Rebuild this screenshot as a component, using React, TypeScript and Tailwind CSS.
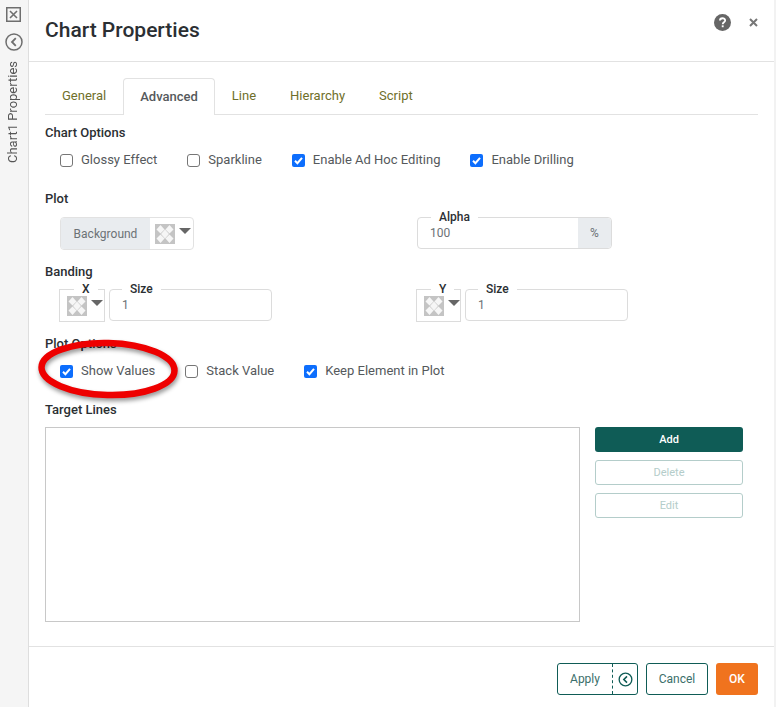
import { Fragment } from "react";

// 透明グリッド風のカラースウォッチ
function Swatch() {
  return (
    <svg width="20" height="20" viewBox="0 0 20 20" className="shrink-0">
      <rect width="20" height="20" fill="#c4c4c4" />
      <path d="M5.5 1 L9.5 5.5 L5.5 9.5 L1.5 5.5 Z M14.5 1 L18.5 5.5 L14.5 9.5 L10.5 5.5 Z M10 5.5 L14 10 L10 14.5 L6 10 Z M5.5 10.5 L9.5 14.5 L5.5 19 L1.5 14.5 Z M14.5 10.5 L18.5 14.5 L14.5 19 L10.5 14.5 Z" fill="#f6f6f6" />
    </svg>
  );
}

function Caret() {
  return <span className="w-0 h-0 border-x-[6px] border-x-transparent border-t-[6px] border-t-[#666] mt-[-6px]" />;
}

function Check({ label, checked }: { label: string; checked?: boolean }) {
  return (
    <label className="flex items-center">
      {checked ? (
        <span className="w-[13px] h-[13px] rounded-[2px] bg-[#0d6efd] flex items-center justify-center">
          <svg width="11" height="11" viewBox="0 0 11 11" fill="none">
            <path d="M2 5.8 L4.4 8.2 L9 2.8" stroke="#fff" strokeWidth="2" />
          </svg>
        </span>
      ) : (
        <span className="w-[13px] h-[13px] rounded-[3px] border border-[#767676] bg-white" />
      )}
      <span className="ml-[8px] text-[13px] text-[#55595c]">{label}</span>
    </label>
  );
}

function SectionLabel({ children, className = "" }: { children: string; className?: string }) {
  return <div className={`text-[13px] font-medium leading-[16px] text-[#2b2f33] ${className}`}>{children}</div>;
}

function Floating({ children, className }: { children: string; className: string }) {
  return (
    <span className={`absolute top-[-8px] bg-white px-[8px] text-[12px] leading-[14px] font-medium text-[#2b2f33] ${className}`}>
      {children}
    </span>
  );
}

function BandField({ axis, boxWidth }: { axis: string; boxWidth: string }) {
  return (
    <div className="flex">
      <div className={`relative ${boxWidth} h-[33px] border border-[#dcdcdc] flex items-center pl-[7px] gap-[4px]`}>
        <Floating className="left-[14px]">{axis}</Floating>
        <Swatch />
        <Caret />
      </div>
      <div className="relative w-[163px] h-[32px] ml-[4px] border border-[#dcdcdc] rounded-[4px] flex items-center pl-[12px] text-[12px] text-[#6c7276]">
        <Floating className="left-[12px]">Size</Floating>
        1
      </div>
    </div>
  );
}

const tabs = ["General", "Advanced", "Line", "Hierarchy", "Script"];

export default function App() {
  return (
    <div className="relative w-[776px] h-[707px] flex bg-[#f2f2f2] overflow-hidden font-['Roboto',sans-serif]">
      {/* 左の折りたたみパネル */}
      <aside className="w-[29px] shrink-0 border-r border-[#dedede] bg-[#f5f5f5] flex flex-col items-center pt-[7px]">
        <svg width="15" height="15" viewBox="0 0 15 15" fill="none" stroke="#6e6e6e" className="mr-[1px]">
          <rect x="0.75" y="0.75" width="13.5" height="13.5" strokeWidth="1.5" />
          <path d="M4 4 L11 11 M11 4 L4 11" strokeWidth="1.6" />
        </svg>
        <svg width="18" height="18" viewBox="0 0 18 18" fill="none" stroke="#6e6e6e" strokeWidth="1.5" className="mt-[11px] mr-[1px]">
          <circle cx="9" cy="9" r="8" />
          <path d="M10.8 5.2 L7 9 L10.8 12.8" strokeWidth="1.8" />
        </svg>
        <span className="mt-[10px] mr-[3px] text-[13px] leading-[16px] text-[#555] [writing-mode:vertical-rl] rotate-180">
          Chart1 Properties
        </span>
      </aside>

      {/* ダイアログ本体 */}
      <main className="w-[745px] shrink-0 bg-white flex flex-col">
        <header className="h-[62px] shrink-0 border-b border-[#e2e2e2] flex items-center justify-between pl-[16px] pr-[16px]">
          <h1 className="text-[21px] font-medium text-[#2b2f33]">Chart Properties</h1>
          <div className="flex items-center gap-[18px] mb-[16px]">
            <svg width="17" height="17" viewBox="0 0 18 18">
              <circle cx="9" cy="9" r="9" fill="#666" />
              <path d="M6.3 7 C6.3 3.7 11.8 3.7 11.8 6.8 C11.8 8.8 9.2 8.7 9.2 10.8" fill="none" stroke="#fff" strokeWidth="1.9" />
              <rect x="8.2" y="12" width="2" height="2" fill="#fff" />
            </svg>
            <svg width="9" height="9" viewBox="0 0 9 9" stroke="#777" strokeWidth="2">
              <path d="M1 1 L8 8 M8 1 L1 8" />
            </svg>
          </div>
        </header>

        <div className="flex-1 px-[16px]">
          <nav className="mt-[16px] h-[37px] border-b border-[#e2e2e2] flex">
            {tabs.map((t) => (
              <Fragment key={t}>
                {t === "Advanced" ? (
                  <span className="h-[37px] px-[16px] flex items-center border border-b-0 border-[#e2e2e2] rounded-t-[4px] bg-white text-[13px] font-medium text-[#55595c]">
                    {t}
                  </span>
                ) : (
                  <span className="h-[36px] px-[17px] flex items-center text-[13px] text-[#6f6f2a]">{t}</span>
                )}
              </Fragment>
            ))}
          </nav>

          <SectionLabel className="mt-[10px]">Chart Options</SectionLabel>
          <div className="mt-[11px] h-[16px] pl-[15px] flex items-center gap-[30px]">
            <Check label="Glossy Effect" />
            <Check label="Sparkline" />
            <Check label="Enable Ad Hoc Editing" checked />
            <Check label="Enable Drilling" checked />
          </div>

          <SectionLabel className="mt-[23px]">Plot</SectionLabel>
          <div className="mt-[10px] flex">
            <div className="ml-[15px] w-[134px] h-[33px] border border-[#e2e2e2] rounded-[4px] flex overflow-hidden">
              <div className="w-[89px] bg-[#e9ecef] flex items-center justify-center text-[12px] text-[#6c7276]">Background</div>
              <div className="flex-1 flex items-center pl-[5px] gap-[4px]">
                <Swatch />
                <Caret />
              </div>
            </div>
            <div className="relative ml-[223px] w-[195px] h-[32px] border border-[#dcdcdc] rounded-[4px] flex">
              <Floating className="left-[13px]">Alpha</Floating>
              <div className="flex-1 flex items-center pl-[12px] text-[12px] text-[#6c7276]">100</div>
              <div className="w-[33px] bg-[#e9ecef] rounded-r-[4px] flex items-center justify-center text-[12px] text-[#6c7276]">%</div>
            </div>
          </div>

          <SectionLabel className="mt-[14px]">Banding</SectionLabel>
          <div className="mt-[9px] pl-[14px] flex">
            <BandField axis="X" boxWidth="w-[46px]" />
            <div className="ml-[144px]">
              <BandField axis="Y" boxWidth="w-[45px]" />
            </div>
          </div>

          <SectionLabel className="mt-[14px]">Plot Options</SectionLabel>
          <div className="mt-[11px] h-[16px] pl-[15px] flex items-center gap-[30px]">
            <Check label="Show Values" checked />
            <Check label="Stack Value" />
            <Check label="Keep Element in Plot" checked />
          </div>

          <SectionLabel className="mt-[23px]">Target Lines</SectionLabel>
          <div className="mt-[9px] flex">
            <div className="w-[535px] h-[195px] border border-[#c8c8c8]" />
            <div className="ml-[15px] w-[148px] flex flex-col gap-[8px]">
              <button className="h-[25px] pt-[1px] rounded-[3px] bg-[#0f5c56] text-[11px] font-medium text-white">Add</button>
              <button className="h-[25px] pt-[1px] rounded-[3px] border border-[#b4cdca] bg-white text-[11px] text-[#b4cdca]">Delete</button>
              <button className="h-[25px] pt-[1px] rounded-[3px] border border-[#b4cdca] bg-white text-[11px] text-[#b4cdca]">Edit</button>
            </div>
          </div>
        </div>

        <footer className="h-[61px] shrink-0 border-t border-[#e2e2e2] flex items-start justify-end gap-[8px] pt-[16px] pr-[16px]">
          <div className="w-[81px] h-[32px] border border-[#0f5c56] rounded-[3px] flex text-[12px] text-[#3b6f6a]">
            <span className="w-[54px] flex items-center justify-center">Apply</span>
            <span className="flex-1 border-l border-dashed border-[#0f5c56] flex items-center justify-center">
              <svg width="15" height="15" viewBox="0 0 18 18" fill="none" stroke="#0f5c56" strokeWidth="1.6">
                <circle cx="9" cy="9" r="7.6" />
                <path d="M10.8 5.2 L7 9 L10.8 12.8" strokeWidth="1.9" />
              </svg>
            </span>
          </div>
          <button className="w-[62px] h-[32px] border border-[#0f5c56] rounded-[3px] text-[12px] text-[#3b6f6a]">Cancel</button>
          <button className="w-[42px] h-[32px] rounded-[3px] bg-[#f0731e] text-[12px] font-medium text-white">OK</button>
        </footer>
      </main>

      {/* 赤い手描き風の楕円 */}
      <svg width="160" height="80" viewBox="0 0 160 80" fill="none" className="absolute left-[28px] top-[329px] drop-shadow-[1px_3px_2px_rgba(0,0,0,0.4)]">
        <ellipse cx="80" cy="40" rx="66.5" ry="26" stroke="#ee0000" strokeWidth="6.5" transform="rotate(1.5 80 40)" />
      </svg>
    </div>
  );
}
